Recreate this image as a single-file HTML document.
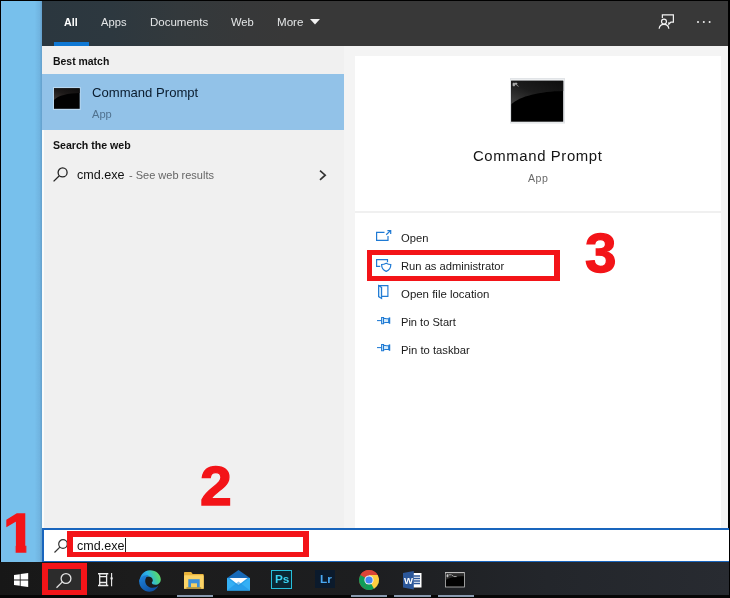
<!DOCTYPE html>
<html lang="en"><head><meta charset="utf-8"><title>Command Prompt search</title>
<style>
html,body{margin:0;padding:0}
body{width:730px;height:598px;position:relative;overflow:hidden;background:#000;font-family:"Liberation Sans",Arial,sans-serif}
.a{position:absolute}
.t{position:absolute;line-height:1;white-space:pre;will-change:transform}
svg{position:absolute;overflow:visible}
.num{position:absolute;line-height:1;font-weight:700;color:#f31418;font-size:55.5px;-webkit-text-stroke:1.3px #f31418;transform-origin:0 0;transform:scaleX(1.05)}
.rb{position:absolute;box-sizing:border-box;border:5.5px solid #f31418}
</style></head><body>

<div class="a" style="left:1px;top:1px;width:41.3px;height:561px;background:linear-gradient(90deg,#7bbfec 0%,#77c0ec 12%,#77c0ec 82%,#70b4e0 94%,#649fcc 100%)"></div>
<div class="a" style="left:42.3px;top:1px;width:686.2px;height:44.5px;background:linear-gradient(90deg,#2b373f 0%,#2d383f 10%,#33393c 20%,#373839 30%,#383838 36%,#383838 100%)"></div>
<div class="a" style="left:42.3px;top:45.5px;width:686.2px;height:483px;background:#f4f4f4"></div>
<div class="a" style="left:42.3px;top:45.5px;width:302px;height:483px;background:#f0f0f0"></div>
<div class="a" style="left:355px;top:56px;width:366.2px;height:473px;background:#fff"></div>
<div class="a" style="left:42.300px;top:130px;width:1.700px;height:398px;background:#f9fbfb"></div>
<span class="t" style="left:64.00px;top:16.94px;font-size:10.7px;color:#fff;font-weight:700;">All</span>
<div class="a" style="left:53.5px;top:41.5px;width:35px;height:4px;background:#0f78d4"></div>
<span class="t" style="left:101.00px;top:16.52px;font-size:11.2px;color:#e4e6e7;">Apps</span>
<span class="t" style="left:150.00px;top:16.87px;font-size:11.5px;color:#e4e6e7;">Documents</span>
<span class="t" style="left:231.00px;top:16.52px;font-size:11.2px;color:#e4e6e7;">Web</span>
<span class="t" style="left:277.30px;top:16.18px;font-size:11.6px;color:#e4e6e7;">More</span>
<svg style="left:309.5px;top:19.3px" width="10" height="6" viewBox="0 0 10 6"><path d="M0 0h10L5 5.4z" fill="#f2f2f2"/></svg>
<svg style="left:658.300px;top:14px" width="17.100" height="15.200" viewBox="0 0 18 16" fill="none" stroke="#f4f4f4" stroke-width="1.25">
<path d="M4.6 4.2V1h11.6v7.6h-2.6l-2.2 2.2V8.6"/><circle cx="6.3" cy="8" r="2.6"/><path d="M1.2 15.6c.3-3 2.4-4.6 5.1-4.6s4.8 1.600 5.100 4.600"/></svg>
<div class="a" style="left:696.6px;top:20.6px;width:2.2px;height:2.2px;border-radius:50%;background:#f0f0f0;box-shadow:5.8px 0 0 #f0f0f0,11.6px 0 0 #f0f0f0"></div>
<span class="t" style="left:53.00px;top:56.95px;font-size:10.45px;color:#111;font-weight:700;">Best match</span>
<div class="a" style="left:42.3px;top:74.2px;width:302px;height:55.500px;background:#92c2e8"></div>
<svg style="left:52.500px;top:86.500px" width="27.700" height="23" viewBox="0 0 27.700 23"><defs><linearGradient id="g1" x1="1" y1="0" x2=".1" y2="1"><stop offset="0" stop-color="#0e0d0d"/><stop offset=".55" stop-color="#1d1a19"/><stop offset="1" stop-color="#3c3633"/></linearGradient></defs>
<rect width="27.700" height="23" fill="#b9d8f1"/><rect x="1" y="1.300" width="25.700" height="20.500" fill="#020202"/><path d="M1 1.300h25.700v4.700C15 6.200 5 8.500 1 13z" fill="url(#g1)"/></svg>
<span class="t" style="left:91.80px;top:86.01px;font-size:13.1px;color:#0a1c2e;">Command Prompt</span>
<span class="t" style="left:91.80px;top:108.90px;font-size:11.1px;color:#50728f;">App</span>
<span class="t" style="left:53.00px;top:139.73px;font-size:10.6px;color:#111;font-weight:700;">Search the web</span>
<svg style="left:52.5px;top:167px" width="15" height="15" viewBox="0 0 15 15" fill="none" stroke="#222" stroke-width="1.3"><circle cx="9.6" cy="5.4" r="4.5"/><path d="M6.300 8.700L.6 14.400"/></svg>
<span class="t" style="left:77.20px;top:169.03px;font-size:12.6px;color:#111;">cmd.exe</span>
<span class="t" style="left:128.80px;top:169.79px;font-size:11px;color:#666;">- See web results</span>
<svg style="left:319px;top:169.800px" width="8" height="10.400" viewBox="0 0 8 10.4" fill="none" stroke="#333" stroke-width="1.7"><path d="M1 .6l5.200 4.600L1 9.800"/></svg>
<svg style="left:510px;top:78px" width="55" height="45.400" viewBox="0 0 55 45.4"><defs><linearGradient id="g2" x1="1" y1="0" x2=".1" y2="1"><stop offset="0" stop-color="#0e0e0e"/><stop offset=".55" stop-color="#1c1c1c"/><stop offset="1" stop-color="#3e3e3e"/></linearGradient></defs>
<rect width="55" height="45.400" fill="#eceef0"/><rect x=".4" y=".4" width="54.200" height="44.600" fill="none" stroke="#dfe2e5" stroke-width=".8"/>
<rect x="1.100" y="2.800" width="52.100" height="40.900" fill="#000"/><path d="M1.100 2.800h52.100v10.200C30 13.500 10 18 1.100 26.500z" fill="url(#g2)"/>
<path d="M3 5.200h1.600v2.600H3zM5 5.200h2v1H5zM6.300 6.800l2.200 1.600" stroke="#bbb" stroke-width=".7" fill="#aaa"/></svg>
<span class="t" style="left:473.40px;top:148.69px;font-size:14.9px;color:#151515;letter-spacing:0.62px;">Command Prompt</span>
<span class="t" style="left:527.90px;top:173.23px;font-size:10.6px;color:#6a6a6a;letter-spacing:0.55px;">App</span>
<div class="a" style="left:355px;top:210.500px;width:366.2px;height:2px;background:#f0f0f0"></div>
<svg style="left:375.500px;top:230.300px" width="15.5" height="11" viewBox="0 0 15.5 11" fill="none" stroke="#1f7ad4" stroke-width="1.2"><path d="M8.500 2.300H.6v8h11.400V6"/><path d="M10.200 4.800L14.600 .6M11.400 .6h3.300v3.300"/></svg>
<span class="t" style="left:400.80px;top:232.52px;font-size:11.2px;color:#1a1a1a;">Open</span>
<svg style="left:376px;top:259px" width="16" height="13" viewBox="0 0 16 13" fill="none" stroke="#1f7ad4" stroke-width="1.2"><path d="M11.500 3.200V.6H.6v6.800h3.600"/><path d="M10.200 4.200c1.600 .900 3 1.300 4.600 1.300 0 3.600-1.500 5.700-4.600 6.900-3.100-1.200-4.600-3.300-4.600-6.900 1.600 0 3-.4 4.600-1.300z"/></svg>
<span class="t" style="left:400.80px;top:260.52px;font-size:11.2px;color:#1a1a1a;">Run as administrator</span>
<svg style="left:378.200px;top:285px" width="10.500" height="14" viewBox="0 0 10.5 14" fill="none" stroke="#1f7ad4" stroke-width="1.150"><path d="M.6 .6h9.300v10.800H3.600"/><path d="M.6 .6l3 1.800v11l-3-1.800z" fill="#d6ebfb"/></svg>
<span class="t" style="left:400.80px;top:288.81px;font-size:11.45px;color:#1a1a1a;">Open file location</span>
<svg style="left:376.800px;top:316.600px" width="13.500" height="7.200" viewBox="0 0 13.500 7.200" fill="none" stroke="#1f7ad4" stroke-width="1.050"><path d="M0 3.600h4.600"/><path d="M4.600 .5h1.900v6.200H4.600z" fill="#d6ebfb"/><path d="M6.500 1.400c1.800 0 3 .6 5.200 .3v3.800c-2.200-.3-3.400 .3-5.200 .3z" fill="#d6ebfb"/><path d="M12.500 .4v6.400" stroke-width="1.500"/></svg>
<span class="t" style="left:400.80px;top:317.10px;font-size:11.1px;color:#1a1a1a;">Pin to Start</span>
<svg style="left:376.800px;top:344.400px" width="13.500" height="7.200" viewBox="0 0 13.500 7.200" fill="none" stroke="#1f7ad4" stroke-width="1.050"><path d="M0 3.600h4.600"/><path d="M4.600 .5h1.900v6.200H4.600z" fill="#d6ebfb"/><path d="M6.500 1.400c1.800 0 3 .6 5.200 .3v3.800c-2.200-.3-3.400 .3-5.200 .3z" fill="#d6ebfb"/><path d="M12.500 .4v6.400" stroke-width="1.500"/></svg>
<span class="t" style="left:400.80px;top:344.68px;font-size:11.25px;color:#1a1a1a;">Pin to taskbar</span>
<div class="rb" style="left:367.100px;top:250.300px;width:193.300px;height:30.700px;border-width:5.900px 6px 5.300px 5.900px"></div>
<div class="a" style="left:41.800px;top:527.800px;width:688px;height:34.800px;box-sizing:border-box;border:2px solid #1965bd;border-right:0;background:#fff"></div>
<svg style="left:53.500px;top:538.800px" width="14" height="14" viewBox="0 0 14 14" fill="none" stroke="#333" stroke-width="1.2"><circle cx="9" cy="5" r="4.300"/><path d="M5.900 8.100L.5 13.500"/></svg>
<span class="t" style="left:77.20px;top:539.88px;font-size:12.55px;color:#111;">cmd.exe</span>
<div class="a" style="left:125.300px;top:538px;width:1px;height:13.500px;background:#222"></div>
<div class="rb" style="left:66.900px;top:531.300px;width:241.900px;height:26.100px;border-width:6.100px 6.300px 5.400px 6.100px"></div>
<div class="a" style="left:0;top:562px;width:730px;height:36px;background:linear-gradient(90deg,#171717 0%,#1c1c1c 18%,#1d1e20 50%,#23262b 75%,#282b31 100%)"></div>
<div class="a" style="left:0;top:595.300px;width:730px;height:2.700px;background:#060606"></div>
<svg style="left:13.800px;top:573.300px" width="14.200" height="14" viewBox="0 0 14.2 14"><path d="M0 2l5.800-.8v5.400H0zM6.600 1.100L14.200 0v6.600H6.600zM0 7.400h5.800v5.400L0 12zM6.600 7.400h7.600V14l-7.600-1.100z" fill="#fff"/></svg>
<div class="a" style="left:47.500px;top:568px;width:34px;height:21.500px;background:#2c2c2c"></div>
<svg style="left:55.700px;top:572.700px" width="15.500" height="15.500" viewBox="0 0 15.500 15.500" fill="none" stroke="#e2e2e2" stroke-width="1.300"><circle cx="10" cy="5.500" r="4.900"/><path d="M6.400 8.900L.5 14.800"/></svg>
<div class="rb" style="left:42.100px;top:562.800px;width:45px;height:31.800px;border-width:6.100px 6.100px 5.800px 6.200px"></div>
<svg style="left:97.600px;top:573.300px" width="15" height="13.200" viewBox="0 0 15 13.200" fill="none" stroke="#ededed"><path d="M0 .7h10.300M0 12.500h10.300" stroke-width="1.400"/><path d="M1.700 1.200v10.800M8.600 1.200v10.800" stroke-width="1.300"/><path d="M1.700 3.700h6.900M1.700 9.500h6.900" stroke-width="1.300"/><path d="M13.600 0v13.200" stroke-width="1.100"/><path d="M12.500 5.400h2.200" stroke-width="2"/></svg>
<svg style="left:139.400px;top:569.600px" width="22" height="22" viewBox="0 0 22 22"><defs><linearGradient id="e1" x1="0" y1=".6" x2="1" y2=".3"><stop offset="0" stop-color="#1b84dc"/><stop offset=".45" stop-color="#2fb5e6"/><stop offset=".75" stop-color="#46cf8f"/><stop offset="1" stop-color="#6bdc5c"/></linearGradient><linearGradient id="e2" x1="0" y1="0" x2=".8" y2="1"><stop offset="0" stop-color="#1f86de"/><stop offset="1" stop-color="#0b4a9c"/></linearGradient></defs>
<path d="M11 .2c6.200 0 10.800 4.300 10.800 9.300 0 3.100-2.500 5.300-5.400 5.300-2.200 0-3.600-.9-3.600-2 0-.8 1-1 1-2.600 0-2-2-3.700-4.800-3.700-4.600 0-8.800 3.900-8.800 7.100C.1 6 4.700 .2 11 .2z" fill="url(#e1)"/>
<path d="M.2 11.500c0-3 3.400-6.300 7.400-6.300 .8 0 1.600 .1 2.300 .4-2.300 .8-3.700 3-3.700 5.400 0 3.700 3.100 6.800 7.300 6.800 2.300 0 4.400-.8 6-2.200-1.700 3.700-5.100 6.200-9 6.200C4.900 21.800 .2 17.400 .2 11.500z" fill="url(#e2)"/></svg>
<svg style="left:184.200px;top:571.700px" width="19.700" height="16.800" viewBox="0 0 19.700 16.800"><path d="M0 1C0 .4 .4 0 1 0h6.200l1.500 2.100h10c.6 0 1 .4 1 1v13.700H0z" fill="#e8b23a"/><rect x="0" y="3.300" width="19.700" height="13.500" rx=".6" fill="#fbd467"/><rect x="4.300" y="7.200" width="11.400" height="8.300" fill="#3b8fd8"/><rect x="7" y="11.300" width="6" height="4.200" fill="#f7d062"/><rect x="2.500" y="15.300" width="14.700" height="1.500" fill="#a88a35"/></svg>
<svg style="left:226.500px;top:570px" width="23" height="20.500" viewBox="0 0 23 20.500"><path d="M0 8L11.500 0 23 8z" fill="#1769b7"/><rect x="0" y="8" width="23" height="12.500" fill="#2aa1ea"/><path d="M2.500 8h18l-9 7z" fill="#fff"/><path d="M0 8l11.500 8.500L23 8v12.500H0z" fill="#35b0f5"/><path d="M0 20.500l11.500-9 11.500 9z" fill="#1e8fe0" opacity=".55"/></svg>
<div class="a" style="left:271.400px;top:569.800px;width:20.200px;height:18.900px;box-sizing:border-box;border:1.500px solid #27bfdb;background:#0a2733"></div>
<span class="t" style="left:275.00px;top:573.71px;font-size:11.8px;color:#3ad2f0;font-weight:700;letter-spacing:-0.2px;">Ps</span>
<div class="a" style="left:314.800px;top:569.600px;width:19.800px;height:18.800px;background:#0b1a2c"></div>
<span class="t" style="left:319.60px;top:573.71px;font-size:11.8px;color:#4aa9f3;font-weight:700;">Lr</span>
<svg style="left:358.600px;top:570.300px" width="20" height="20" viewBox="-10 -10 20 20"><circle r="10" fill="#db4437"/><path d="M0 0L-8.660 -5A10 10 0 0 0 -5 8.660z" fill="#0f9d58"/><path d="M0 0L-5 8.660A10 10 0 0 0 8.660 5 10 10 0 0 0 10 0L0 0z" fill="#0f9d58"/><path d="M0 0L5 8.660A10 10 0 0 0 8.660 -5L0 -5z" fill="#ffcd40"/><path d="M-8.660 -5A10 10 0 0 1 8.660 -5L0 -5z" fill="#db4437"/><circle r="4.600" fill="#f1f1f1"/><circle r="3.600" fill="#4285f4"/></svg>
<svg style="left:403px;top:570.800px" width="18.500" height="18.500" viewBox="0 0 18.500 18.500"><rect x="8" y="2" width="10.500" height="14.500" fill="#fff"/><path d="M10.500 5h6.500M10.500 7.500h6.500M10.500 10h6.500M10.500 12.500h6.500" stroke="#2b579a" stroke-width="1.300"/><path d="M0 2L10.800 0v18.500L0 16.500z" fill="#2b579a"/></svg>
<span class="t" style="left:404.10px;top:576.26px;font-size:9.5px;color:#fff;font-weight:700;">W</span>
<svg style="left:445.300px;top:572.200px" width="19.800" height="15.400" viewBox="0 0 19.800 15.400"><rect width="19.800" height="15.400" fill="#bdbdbd"/><rect x=".8" y="1.400" width="18.200" height="13.200" fill="#020202"/><path d="M.8 1.400h18.200v2.800C11 4.400 4 5.500 .8 8z" fill="#2c2c2c"/><path d="M2 2.800h1v2H2zM3.600 2.800h3M7.200 3l1.300 1.600M9 4.600h2.600" stroke="#c8c8c8" stroke-width=".8" fill="#c8c8c8"/></svg>
<div class="a" style="left:176.5px;top:594.800px;width:36.5px;height:1.800px;background:#8a9bb0"></div>
<div class="a" style="left:351px;top:594.800px;width:36.0px;height:1.800px;background:#8a9bb0"></div>
<div class="a" style="left:394.3px;top:594.800px;width:36.7px;height:1.800px;background:#8a9bb0"></div>
<div class="a" style="left:438px;top:594.800px;width:36.3px;height:1.800px;background:#8a9bb0"></div>
<span class="num" style="left:3.100px;top:506px;clip-path:polygon(0 0,100% 0,100% 38.700px,22.200px 38.700px,22.200px 100%,12px 100%,12px 38.700px,0 38.700px)">1</span>
<span class="num" style="left:200.200px;top:458.600px;transform:scaleX(1.03)">2</span>
<span class="num" style="left:585px;top:225.700px;transform:scaleX(1.02)">3</span>
<div class="a" style="left:728.800px;top:0;width:1.200px;height:598px;background:#000"></div>
</body></html>
